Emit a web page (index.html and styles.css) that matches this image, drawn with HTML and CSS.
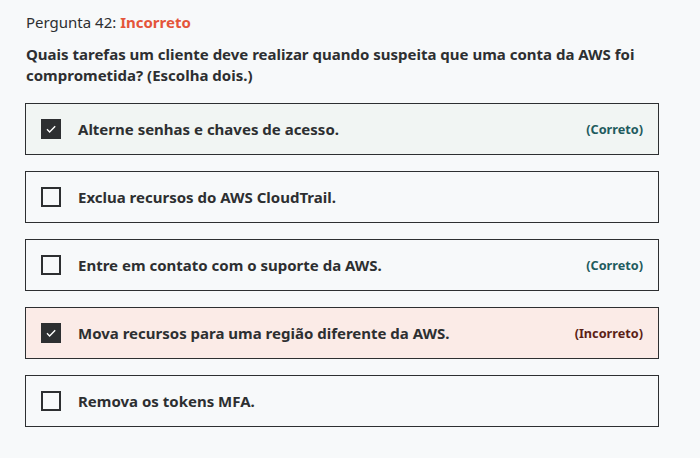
FILE: index.html
```html
<!DOCTYPE html>
<html lang="pt">
<head>
<meta charset="utf-8">
<link rel="stylesheet" href="styles.css">
</head>
<body>
<div class="page">
  <div class="qhead">Pergunta 42: <span class="bad">Incorreto</span></div>
  <div class="question">Quais tarefas um cliente deve realizar quando suspeita que uma conta da AWS foi comprometida? (Escolha dois.)</div>
  <div class="options">
    <div class="opt correct">
      <span class="box checked"><svg viewBox="0 0 20 20" width="20" height="20"><path d="M6 10.3l2.6 2.6L14.2 7.3" fill="none" stroke="#fff" stroke-width="1.4"/></svg></span>
      <span class="text">Alterne senhas e chaves de acesso.</span>
      <span class="tag ok">(Correto)</span>
    </div>
    <div class="opt">
      <span class="box"></span>
      <span class="text">Exclua recursos do AWS CloudTrail.</span>
    </div>
    <div class="opt">
      <span class="box"></span>
      <span class="text">Entre em contato com o suporte da AWS.</span>
      <span class="tag ok">(Correto)</span>
    </div>
    <div class="opt wrong">
      <span class="box checked"><svg viewBox="0 0 20 20" width="20" height="20"><path d="M6 10.3l2.6 2.6L14.2 7.3" fill="none" stroke="#fff" stroke-width="1.4"/></svg></span>
      <span class="text">Mova recursos para uma região diferente da AWS.</span>
      <span class="tag no">(Incorreto)</span>
    </div>
    <div class="opt">
      <span class="box"></span>
      <span class="text">Remova os tokens MFA.</span>
    </div>
  </div>
</div>
</body>
</html>
```

FILE: styles.css
```css
html, body {
  margin: 0;
  padding: 0;
  background: #f7f9fa;
}
body {
  font-family: "Noto Sans", "Liberation Sans", sans-serif;
  color: #2d2f31;
}
.page {
  width: 634px;
  padding: 11px 0 0 25px;
}
.qhead {
  font-size: 15px;
  line-height: 22px;
  padding-left: 1px;
}
.bad {
  color: #e4553a;
  font-weight: 700;
}
.question {
  margin-top: 11px;
  font-size: 15px;
  font-weight: 700;
  line-height: 21px;
  padding-left: 1px;
}
.options {
  margin-top: 17px;
  display: flex;
  flex-direction: column;
  gap: 16px;
}
.opt {
  display: flex;
  align-items: center;
  height: 50px;
  border: 1px solid #2d2f31;
  padding: 0 15px 0 15px;
}
.opt.correct { background: #f1f5f3; }
.opt.wrong { background: #fbebe7; }
.box {
  width: 20px;
  height: 20px;
  box-sizing: border-box;
  border: 2px solid #2d2f31;
  flex: none;
  display: flex;
}
.box.checked {
  border: none;
  background: #2d2f31;
}
.text {
  margin-left: 17px;
  font-size: 15px;
  font-weight: 700;
  flex: 1;
}
.tag {
  font-size: 12.7px;
  font-weight: 700;
}
.tag.ok { color: #1f5c5e; }
.tag.no { color: #5b1f17; }
```
